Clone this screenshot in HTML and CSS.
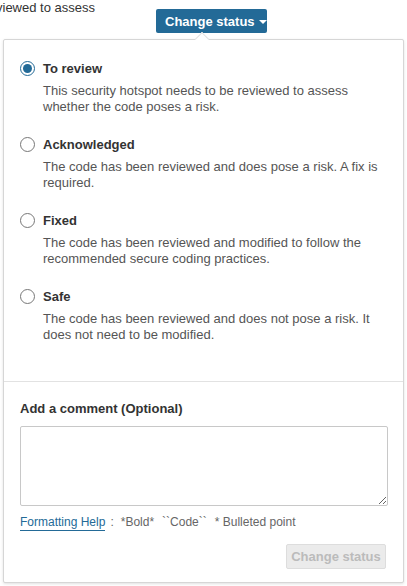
FILE: index.html
```html
<!DOCTYPE html>
<html>
<head>
<meta charset="utf-8">
<link rel="stylesheet" href="styles.css">
</head>
<body>
<div class="page">
  <div class="bg-text">reviewed to assess</div>
  <div class="trigger-row">
    <button class="trigger">Change status <span class="caret"></span></button>
  </div>
  <div class="popup">
    <div class="arrow"></div>
    <div class="options">
      <div class="option">
        <div class="opt-head"><span class="radio checked"></span><span class="opt-label">To review</span></div>
        <div class="opt-desc">This security hotspot needs to be reviewed to assess whether the code poses a risk.</div>
      </div>
      <div class="option">
        <div class="opt-head"><span class="radio"></span><span class="opt-label">Acknowledged</span></div>
        <div class="opt-desc">The code has been reviewed and does pose a risk. A fix is required.</div>
      </div>
      <div class="option">
        <div class="opt-head"><span class="radio"></span><span class="opt-label">Fixed</span></div>
        <div class="opt-desc">The code has been reviewed and modified to follow the recommended secure coding practices.</div>
      </div>
      <div class="option">
        <div class="opt-head"><span class="radio"></span><span class="opt-label">Safe</span></div>
        <div class="opt-desc">The code has been reviewed and does not pose a risk. It does not need to be modified.</div>
      </div>
    </div>
    <div class="comment">
      <div class="comment-title">Add a comment (Optional)</div>
      <textarea class="comment-box"></textarea>
      <div class="format-help"><a class="help-link">Formatting Help</a><span class="colon">:</span><span>*Bold*</span><span>``Code``</span><span>* Bulleted point</span></div>
      <div class="actions"><button class="submit" disabled>Change status</button></div>
    </div>
  </div>
</div>
</body>
</html>
```
FILE: styles.css
```css
* { box-sizing: border-box; }
html, body { margin: 0; padding: 0; background: #fff; }
body { font-family: "Liberation Sans", Arial, sans-serif; color: #333; font-size: 13px; width: 407px; height: 586px; overflow: hidden; }
.page { position: relative; height: 586px; }
.bg-text { position: absolute; right: 312px; top: 0; font-size: 13px; line-height: 16px; color: #333; white-space: nowrap; }
.trigger-row { display: flex; justify-content: flex-start; padding: 9px 0 0 156px; height: 39px; }
.trigger { height: 24px; width: 111px; padding: 0 0 0 9px; border: none; border-radius: 2px; background: #236a97; color: #fff; font-family: "Liberation Sans", Arial, sans-serif; font-weight: bold; font-size: 13px; display: flex; align-items: center; gap: 4px; white-space: nowrap; }
.caret { width: 0; height: 0; border-left: 4px solid transparent; border-right: 4px solid transparent; border-top: 4px solid #fff; margin-top: 1px; }
.popup { position: relative; margin: 0 3px; border: 1px solid #d6d6d6; border-radius: 2px; background: #fff; box-shadow: 0 1px 3px rgba(0,0,0,0.12); height: 544px; }
.arrow { position: absolute; top: -6px; left: 193px; width: 10px; height: 10px; background: #fff; border-left: 1px solid #e2e2e2; border-top: 1px solid #e2e2e2; transform: rotate(45deg); }
.options { padding: 16px 16px 38px 16px; border-bottom: 1px solid #e2e2e2; }
.option { margin-bottom: 17px; }
.option:last-child { margin-bottom: 0; }
.opt-head { display: flex; align-items: center; height: 24px; }
.radio { width: 15px; height: 15px; border: 1px solid #777; border-radius: 50%; margin-left: 0; margin-right: 8px; display: flex; align-items: center; justify-content: center; flex: none; }
.radio.checked { border-color: #236a97; }
.radio.checked::after { content: ""; width: 9px; height: 9px; border-radius: 50%; background: #236a97; }
.opt-label { font-weight: bold; font-size: 13px; color: #333; }
.opt-desc { margin-top: 3px; margin-left: 23px; line-height: 16px; color: #555; font-size: 13px; }
.comment { padding: 18px 16px 0 16px; }
.comment-title { font-weight: bold; font-size: 13px; line-height: 18px; color: #333; }
.comment-box { display: block; margin-top: 8px; width: 368px; height: 80px; border: 1px solid #c8c8c8; border-radius: 2px; resize: both; font-family: inherit; }
.format-help { display: flex; gap: 8px; margin-top: 8px; line-height: 16px; color: #666; font-size: 12px; }
.help-link { color: #236a97; border-bottom: 1px solid #236a97; }
.colon { margin-left: -3px; margin-right: -1px; }
.actions { display: flex; justify-content: flex-end; margin-top: 13px; }
.submit { width: 100px; height: 25px; border: 1px solid #ddd; border-radius: 2px; background: #ebebeb; color: #bbb; font-family: "Liberation Sans", Arial, sans-serif; font-weight: bold; font-size: 13px; margin-right: 1px; white-space: nowrap; padding: 0; }
```
